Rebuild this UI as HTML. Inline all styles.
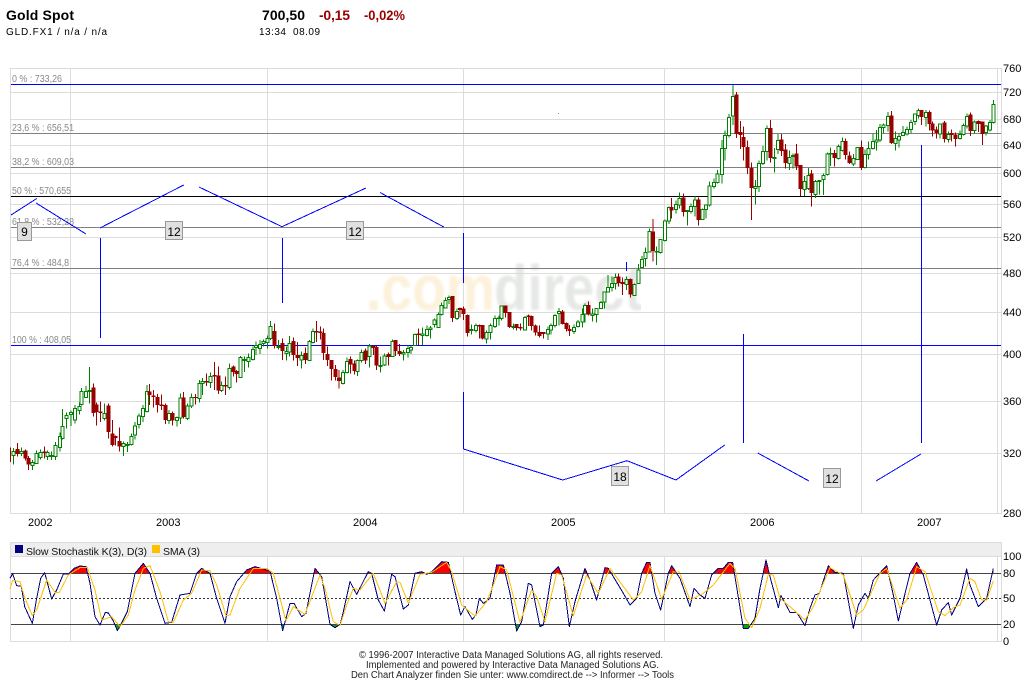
<!DOCTYPE html>
<html lang="de"><head><meta charset="utf-8"><title>Gold Spot</title>
<style>
html,body{margin:0;padding:0;background:#fff;width:1024px;height:680px;overflow:hidden}
svg{display:block}
text{font-family:"Liberation Sans",sans-serif}
.s{shape-rendering:crispEdges}
.g{stroke:#dcdcdc;fill:none;stroke-width:1}
.gw{fill:none;stroke:#008000;stroke-width:3}
.rw{fill:none;stroke:#990000;stroke-width:3}
.gb{fill:#fff;stroke:#008000;stroke-width:3}
.rb{fill:#990000;stroke:#990000;stroke-width:3}
.k{fill:none;stroke:#000080;stroke-width:3;stroke-linejoin:round}
.d{fill:none;stroke:#ffc000;stroke-width:3;stroke-linejoin:round}
.fr{fill:#f00}
.fg{fill:#0a0}
.fib{font-size:10px;fill:#888}
.ax{font-size:11px;fill:#000}
.ft{font-size:10px;fill:#222}
.bl{stroke:#0000ff;stroke-width:1;fill:none}
.box{fill:#e0e0e0;stroke:#999;stroke-width:1}
.bt{font-size:12px;fill:#000;text-anchor:middle}
</style></head><body>
<svg width="1024" height="680" viewBox="0 0 1024 680" xmlns="http://www.w3.org/2000/svg">
<defs>
<filter id="bl" x="-5%" y="-5%" width="110%" height="110%"><feGaussianBlur stdDeviation="1.2"/></filter>
<clipPath id="wm"><rect x="360" y="255" width="281" height="65"/></clipPath>
<clipPath id="cr"><rect x="0" y="540" width="1001" height="33"/></clipPath>
<clipPath id="cg"><rect x="0" y="625" width="1001" height="20"/></clipPath>
</defs>

<!-- header -->
<text x="6" y="20" font-size="14" font-weight="bold" textLength="68">Gold Spot</text>
<text x="262" y="20" font-size="14" font-weight="bold" textLength="43">700,50</text>
<text x="319" y="20" font-size="14" font-weight="bold" fill="#990000" textLength="31">-0,15</text>
<text x="364" y="20" font-size="14" font-weight="bold" fill="#990000" textLength="41" lengthAdjust="spacingAndGlyphs">-0,02%</text>
<text x="6" y="35" font-size="10" textLength="101">GLD.FX1 / n/a / n/a</text>
<text x="259" y="35" font-size="10" textLength="61" xml:space="preserve">13:34  08.09</text>

<!-- watermark -->
<g clip-path="url(#wm)"><g filter="url(#bl)" font-weight="bold" font-size="64">
<text x="366" y="310" fill="#fcf1da" textLength="129" lengthAdjust="spacingAndGlyphs">.com</text>
<text x="494" y="310" fill="#e5e8e5" textLength="149" lengthAdjust="spacingAndGlyphs">direct</text>
</g></g>

<!-- grid -->
<g class="s">
<path class="g" d="M10.5 68.5H1001.5V513.5H10.5ZM11 92.5H1001M11 119.5H1001M11 145.5H1001M11 173.5H1001M11 204.5H1001M11 237.5H1001M11 273.5H1001M11 312.5H1001M11 354.5H1001M11 401.5H1001M11 453.5H1001M70.5 68V513M267.5 68V513M463.5 68V513M664.5 68V513M861.5 68V513M997.5 68V513"/>
<path d="M11 84.5H1001M11 345.5H1001" stroke="#0000ff" fill="none"/>
<path d="M11 133.5H1001M11 167.5H1001M11 227.5H1001M11 268.5H1001" stroke="#808080" fill="none"/>
<path d="M11 196.5H1001" stroke="#000" fill="none"/>
<rect x="558" y="113" width="1" height="1" fill="#888"/>
</g>

<!-- fib labels -->
<text class="fib" x="12" y="82" textLength="50" lengthAdjust="spacingAndGlyphs">0 % : 733,26</text>
<text class="fib" x="12" y="131" textLength="62" lengthAdjust="spacingAndGlyphs">23,6 % : 656,51</text>
<text class="fib" x="12" y="165" textLength="62" lengthAdjust="spacingAndGlyphs">38,2 % : 609,03</text>
<text class="fib" x="12" y="194" textLength="59" lengthAdjust="spacingAndGlyphs">50 % : 570,655</text>
<text class="fib" x="12" y="225" textLength="62" lengthAdjust="spacingAndGlyphs">61,8 % : 532,28</text>
<text class="fib" x="12" y="266" textLength="57" lengthAdjust="spacingAndGlyphs">76,4 % : 484,8</text>
<text class="fib" x="12" y="343" textLength="59" lengthAdjust="spacingAndGlyphs">100 % : 408,05</text>

<!-- candles -->
<g class="s">
<g transform="translate(0 240) scale(.33333)">
<path class="gw" d="M40 624V674M64 622V648M98 660V690M110 632V672M122 628V658M143 632V660M155 634V660M167 606V660M180 578V634M188 507V598M200 518V566M213 512V558M225 495V550M238 488V524M245 444V497M258 438V474M268 381V490M314 490V542M371 605V648M383 606V636M395 580V616M405 546V598M417 520V566M429 495V546M441 435V518M507 510V552M531 530V560M541 460V552M563 490V540M575 460V504M599 420V488M608 414V465M632 398V444M665 425V456M689 370V448M722 348V414M734 350V396M746 340V382M759 320V362M768 304V345M780 300V342M791 298V320M803 286V325M812 243V300M836 300V328M859 320V362M869 288V350M905 335V386M928 300V362M939 266V310"/>
<path class="rw" d="M31 623V666M52 609V650M76 628V662M85 648V690M133 620V656M280 430V530M289 488V557M301 484V546M325 490V596M337 540V620M346 586V616M358 563V635M449 432V495M461 450V502M473 462V518M485 464V510M497 490V552M518 515V556M551 456V536M587 462V494M620 400V438M644 366V450M656 380V462M677 410V465M700 376V410M709 390V428M824 250V326M847 295V360M881 293V362M892 306V378M916 322V372M950 243V306M962 260V298M970 265V360M982 320V378M994 360V422M1006 375V422M1017 390V446"/>
<path class="gb" d="M40 634h4.5V647h-9V634zM64 634h4.5V640h-9V634zM98 667h4.5V677h-9V667zM110 640h4.5V670h-9V640zM122 638h4.5V652h-9V638zM143 637h4.5V650h-9V637zM155 646h4.5V650h-9V646zM167 616h4.5V650h-9V616zM180 590h4.5V622h-9V590zM188 560h4.5V596h-9V560zM200 526h4.5V536h-9V526zM213 518h4.5V524h-9V518zM225 505h4.5V540h-9V505zM238 499h4.5V512h-9V499zM245 454h4.5V494h-9V454zM258 454h4.5V472h-9V454zM268 452h4.5V454h-9V452zM314 520h4.5V536h-9V520zM371 611h4.5V620h-9V611zM383 614h4.5V616h-9V614zM395 589h4.5V613h-9V589zM405 558h4.5V585h-9V558zM417 528h4.5V554h-9V528zM429 505h4.5V529h-9V505zM441 454h4.5V514h-9V454zM507 520h4.5V541h-9V520zM531 533h4.5V541h-9V533zM541 474h4.5V534h-9V474zM563 498h4.5V536h-9V498zM575 472h4.5V498h-9V472zM599 431h4.5V475h-9V431zM608 425h4.5V430h-9V425zM632 409h4.5V428h-9V409zM665 436h4.5V451h-9V436zM689 386h4.5V443h-9V386zM722 352h4.5V412h-9V352zM734 358h4.5V361h-9V358zM746 352h4.5V364h-9V352zM759 328h4.5V358h-9V328zM768 317h4.5V322h-9V317zM780 314h4.5V326h-9V314zM791 305h4.5V311h-9V305zM803 296h4.5V308h-9V296zM812 259h4.5V296h-9V259zM836 319h4.5V322h-9V319zM859 335h4.5V340h-9V335zM869 310h4.5V336h-9V310zM905 346h4.5V360h-9V346zM928 304h4.5V361h-9V304zM939 274h4.5V308h-9V274z"/>
<path class="rb" d="M52 628h4.5V641h-9V628zM76 633h4.5V654h-9V633zM85 655h4.5V672h-9V655zM133 636h4.5V637h-9V636zM280 444h4.5V518h-9V444zM289 495h4.5V515h-9V495zM301 516h4.5V518h-9V516zM325 498h4.5V575h-9V498zM337 582h4.5V614h-9V582zM346 590h4.5V592h-9V590zM358 604h4.5V618h-9V604zM449 456h4.5V464h-9V456zM461 468h4.5V470h-9V468zM473 472h4.5V494h-9V472zM485 495h4.5V497h-9V495zM497 496h4.5V539h-9V496zM518 520h4.5V540h-9V520zM551 474h4.5V530h-9V474zM587 472h4.5V473h-9V472zM620 424h4.5V426h-9V424zM644 406h4.5V408h-9V406zM656 408h4.5V450h-9V408zM677 436h4.5V438h-9V436zM700 381h4.5V394h-9V381zM709 394h4.5V401h-9V394zM824 274h4.5V316h-9V274zM847 310h4.5V332h-9V310zM881 304h4.5V344h-9V304zM892 346h4.5V352h-9V346zM916 340h4.5V358h-9V340zM950 274h4.5V276h-9V274zM962 276h4.5V278h-9V276zM970 280h4.5V338h-9V280zM982 343h4.5V358h-9V343zM994 361h4.5V386h-9V361zM1006 388h4.5V410h-9V388zM1017 414h4.5V422h-9V414z"/>
</g>
<g transform="translate(340 240) scale(.33333)">
<path class="gw" d="M9 390V434M21 352V400M53 358V408M65 328V368M88 312V382M122 350V398M134 340V378M158 298V350M190 330V362M204 316V352M213 318V342M225 280V318M247 262V315M261 256V290M271 258V296M283 236V262M295 218V264M305 188V226M316 172V206M327 166V192M351 206V240M395 254V284M408 250V278M440 272V311M452 250V298M465 226V264M477 226V256M485 196V242M520 250V268M555 228V272M624 260V300M633 250V284M645 222V262M657 204V256M702 254V282M714 240V262M727 206V262M735 190V248M758 205V244M770 204V248M783 183V206M793 155V205M804 105V158M816 110V155M827 100V148M860 110V150M884 130V168M895 72V132"/>
<path class="rw" d="M31 350V400M43 362V404M76 325V372M100 316V345M109 318V390M146 338V376M167 300V348M178 312V348M235 265V316M338 168V246M360 202V232M371 200V240M382 224V290M418 254V296M428 255V298M496 198V232M508 216V264M530 252V272M542 250V272M565 224V258M575 226V272M587 254V286M598 256V292M611 276V295M668 210V254M680 248V274M689 255V288M745 184V226M835 100V140M847 112V165M871 115V172"/>
<path class="gb" d="M9 398h4.5V430h-9V398zM21 365h4.5V397h-9V365zM53 362h4.5V394h-9V362zM65 337h4.5V362h-9V337zM88 318h4.5V350h-9V318zM122 377h4.5V380h-9V377zM134 348h4.5V375h-9V348zM158 305h4.5V349h-9V305zM190 338h4.5V342h-9V338zM204 326h4.5V338h-9V326zM213 322h4.5V330h-9V322zM225 284h4.5V317h-9V284zM247 282h4.5V286h-9V282zM261 268h4.5V287h-9V268zM271 264h4.5V268h-9V264zM283 240h4.5V254h-9V240zM295 224h4.5V262h-9V224zM305 196h4.5V224h-9V196zM316 182h4.5V204h-9V182zM327 172h4.5V178h-9V172zM351 214h4.5V236h-9V214zM395 268h4.5V272h-9V268zM408 256h4.5V272h-9V256zM440 277h4.5V297h-9V277zM452 256h4.5V278h-9V256zM465 236h4.5V260h-9V236zM477 234h4.5V236h-9V234zM485 198h4.5V236h-9V198zM520 259h4.5V262h-9V259zM555 232h4.5V270h-9V232zM624 268h4.5V282h-9V268zM633 256h4.5V270h-9V256zM645 226h4.5V256h-9V226zM657 214h4.5V220h-9V214zM702 262h4.5V274h-9V262zM714 246h4.5V260h-9V246zM727 224h4.5V246h-9V224zM735 196h4.5V222h-9V196zM758 222h4.5V226h-9V222zM770 205h4.5V224h-9V205zM783 187h4.5V205h-9V187zM793 156h4.5V186h-9V156zM804 142h4.5V156h-9V142zM816 131h4.5V143h-9V131zM827 113h4.5V130h-9V113zM860 118h4.5V134h-9V118zM884 133h4.5V166h-9V133zM895 90h4.5V130h-9V90z"/>
<path class="rb" d="M31 358h4.5V372h-9V358zM43 372h4.5V392h-9V372zM76 333h4.5V360h-9V333zM100 320h4.5V322h-9V320zM109 322h4.5V375h-9V322zM146 344h4.5V349h-9V344zM167 302h4.5V332h-9V302zM178 335h4.5V340h-9V335zM235 282h4.5V284h-9V282zM338 170h4.5V232h-9V170zM360 206h4.5V208h-9V206zM371 207h4.5V220h-9V207zM382 226h4.5V278h-9V226zM418 256h4.5V258h-9V256zM428 256h4.5V294h-9V256zM496 198h4.5V218h-9V198zM508 217h4.5V260h-9V217zM530 253h4.5V262h-9V253zM542 262h4.5V264h-9V262zM565 228h4.5V230h-9V228zM575 229h4.5V257h-9V229zM587 258h4.5V276h-9V258zM598 278h4.5V286h-9V278zM611 278h4.5V280h-9V278zM668 216h4.5V250h-9V216zM680 250h4.5V266h-9V250zM689 268h4.5V272h-9V268zM745 196h4.5V222h-9V196zM835 111h4.5V128h-9V111zM847 127h4.5V130h-9V127zM871 118h4.5V162h-9V118z"/>
</g>
<g transform="translate(610 150) scale(.33333)">
<path class="gw" d="M96 318V354M107 293V350M119 235V308M140 290V345M152 268V310M165 208V274M177 170V222M198 152V190M209 127V175M232 180V227M243 160V190M255 138V200M277 175V210M288 165V205M299 95V170M312 85V115M323 60V100"/>
<path class="rw" d="M129 207V335M185 144V205M220 130V200M265 142V227"/>
<path class="gb" d="M96 328h4.5V353h-9V328zM107 308h4.5V326h-9V308zM119 244h4.5V306h-9V244zM140 304h4.5V306h-9V304zM152 268h4.5V308h-9V268zM165 213h4.5V272h-9V213zM177 172h4.5V213h-9V172zM198 163h4.5V178h-9V163zM209 145h4.5V165h-9V145zM232 182h4.5V184h-9V182zM243 170h4.5V184h-9V170zM255 150h4.5V170h-9V150zM277 178h4.5V208h-9V178zM288 165h4.5V178h-9V165zM299 108h4.5V165h-9V108zM312 97h4.5V110h-9V97zM323 72h4.5V97h-9V72z"/>
<path class="rb" d="M129 246h4.5V302h-9V246zM185 172h4.5V180h-9V172zM220 144h4.5V185h-9V144zM265 150h4.5V209h-9V150z"/>
</g>
<g transform="translate(690 70) scale(.33333)">
<path class="gw" d="M96 210V340M105 182V272M117 132V202M129 44V165M197 330V404M207 272V366M219 228V285M231 166V272M254 234V308M264 192V252M299 242V300M309 250V296M344 318V378M355 294V360M377 330V384M389 330V374M401 310V375M413 248V316M421 232V288M446 224V268M458 202V244M491 252V288M503 232V270"/>
<path class="rw" d="M139 66V204M151 153V237M160 170V272M172 212V312M184 278V450M241 150V278M274 192V258M286 222V296M319 222V300M331 285V378M364 300V410M433 240V290M467 206V268M478 244V282"/>
<path class="gb" d="M96 235h4.5V314h-9V235zM105 196h4.5V236h-9V196zM117 142h4.5V196h-9V142zM129 79h4.5V138h-9V79zM197 349h4.5V355h-9V349zM207 280h4.5V350h-9V280zM219 244h4.5V280h-9V244zM231 175h4.5V244h-9V175zM254 263h4.5V265h-9V263zM264 211h4.5V238h-9V211zM299 262h4.5V280h-9V262zM309 256h4.5V260h-9V256zM344 334h4.5V358h-9V334zM355 316h4.5V356h-9V316zM377 334h4.5V374h-9V334zM389 332h4.5V334h-9V332zM401 316h4.5V328h-9V316zM413 252h4.5V314h-9V252zM421 250h4.5V252h-9V250zM446 229h4.5V266h-9V229zM458 214h4.5V242h-9V214zM491 265h4.5V282h-9V265zM503 232h4.5V268h-9V232z"/>
<path class="rb" d="M139 75h4.5V190h-9V75zM151 187h4.5V193h-9V187zM160 202h4.5V230h-9V202zM172 232h4.5V292h-9V232zM184 296h4.5V353h-9V296zM241 175h4.5V263h-9V175zM274 210h4.5V242h-9V210zM286 240h4.5V278h-9V240zM319 252h4.5V288h-9V252zM331 286h4.5V356h-9V286zM364 312h4.5V368h-9V312zM433 250h4.5V262h-9V250zM467 214h4.5V254h-9V214zM478 258h4.5V278h-9V258z"/>
</g>
<g transform="translate(850 90) scale(.33333)">
<path class="gw" d="M45 178V236M56 155V208M69 130V178M80 120V182M90 102V156M101 100V130M114 66V125M137 125V182M147 130V172M159 108V138M171 110V136M183 90V130M195 70V105M205 55V85M228 60V110M270 100V146M296 125V158M330 122V148M340 100V136M351 70V115M374 92V130M408 105V136M420 90V125M431 30V100"/>
<path class="rw" d="M34 152V240M124 63V162M215 60V105M238 62V122M247 95V140M259 110V145M283 93V158M304 118V155M316 128V170M361 68V138M385 92V126M397 95V165"/>
<path class="gb" d="M45 193h4.5V232h-9V193zM56 175h4.5V193h-9V175zM69 155h4.5V176h-9V155zM80 150h4.5V156h-9V150zM90 112h4.5V150h-9V112zM101 105h4.5V112h-9V105zM114 80h4.5V106h-9V80zM137 146h4.5V160h-9V146zM147 140h4.5V150h-9V140zM159 128h4.5V136h-9V128zM171 118h4.5V132h-9V118zM183 98h4.5V118h-9V98zM195 72h4.5V94h-9V72zM205 62h4.5V76h-9V62zM228 67h4.5V82h-9V67zM270 102h4.5V132h-9V102zM296 133h4.5V148h-9V133zM330 133h4.5V146h-9V133zM340 107h4.5V133h-9V107zM351 80h4.5V108h-9V80zM374 96h4.5V122h-9V96zM408 108h4.5V128h-9V108zM420 98h4.5V120h-9V98zM431 43h4.5V97h-9V43z"/>
<path class="rb" d="M34 172h4.5V232h-9V172zM124 78h4.5V158h-9V78zM215 62h4.5V80h-9V62zM238 68h4.5V100h-9V68zM247 102h4.5V120h-9V102zM259 120h4.5V128h-9V120zM283 99h4.5V146h-9V99zM304 131h4.5V133h-9V131zM316 135h4.5V146h-9V135zM361 75h4.5V122h-9V75zM385 95h4.5V100h-9V95zM397 96h4.5V130h-9V96z"/>
</g>
</g>

<!-- blue analysis lines -->
<g class="s">
<path class="bl" d="M100.5 238V338M282.5 238V303M463.5 233V283M463.5 392V449M626.5 262V271M743.5 334V443M921.5 145V443"/>
</g>
<path class="bl s" d="M11 215L36.7 198.5M36 203L86 234M100 228L183.7 185M199 187L282 226.7L366 188M380 192.5L443.7 227M463.5 449L562.7 480L627 460.7L676 480L724.7 445M757.7 453L809 481M876 481L921 454"/>

<!-- boxes -->
<g class="s">
<rect class="box" x="17.5" y="222.5" width="14" height="18"/>
<rect class="box" x="165.5" y="221.5" width="17" height="18"/>
<rect class="box" x="346.5" y="221.5" width="17" height="18"/>
<rect class="box" x="611.5" y="466.5" width="17" height="19"/>
<rect class="box" x="823.5" y="468.5" width="17" height="19"/>
</g>
<text class="bt" x="24.5" y="236">9</text>
<text class="bt" x="174" y="236">12</text>
<text class="bt" x="355" y="236">12</text>
<text class="bt" x="620" y="481">18</text>
<text class="bt" x="832" y="483">12</text>

<!-- axis labels -->
<g class="ax">
<text x="1003" y="72">760</text><text x="1003" y="96">720</text><text x="1003" y="123">680</text><text x="1003" y="149">640</text><text x="1003" y="177">600</text><text x="1003" y="208">560</text><text x="1003" y="241">520</text><text x="1003" y="277">480</text><text x="1003" y="316">440</text><text x="1003" y="358">400</text><text x="1003" y="405">360</text><text x="1003" y="457">320</text><text x="1003" y="517">280</text>
<text x="1003" y="560">100</text><text x="1003" y="577">80</text><text x="1003" y="602">50</text><text x="1003" y="628">20</text><text x="1003" y="645">0</text>
<text x="28" y="526">2002</text><text x="156" y="526">2003</text><text x="353" y="526">2004</text><text x="551" y="526">2005</text><text x="750" y="526">2006</text><text x="917" y="526">2007</text>
</g>

<!-- stochastic panel -->
<g class="s">
<rect x="11" y="543" width="990" height="14" fill="#eeeeee"/>
<path class="g" d="M10.5 542.5H1001.5V641.5H10.5ZM11 556.5H1001M70.5 557V641M267.5 557V641M463.5 557V641M664.5 557V641M861.5 557V641M997.5 557V641"/>
<rect x="15" y="545" width="8" height="8" fill="#000080"/>
<rect x="152" y="545" width="8" height="8" fill="#ffc000"/>
<path d="M11 573.5H1001M11 624.5H1001" stroke="#444" fill="none"/>
<path d="M11 598.5H1001" stroke="#333" stroke-dasharray="2 2" fill="none"/>
</g>
<text x="26" y="555" font-size="10.5" fill="#111" textLength="121">Slow Stochastik K(3), D(3)</text>
<text x="163" y="555" font-size="10.5" fill="#111" textLength="37">SMA (3)</text>

<g class="s">
<g clip-path="url(#cr)">
<path class="fr" transform="translate(0 535) scale(.33333)" d="M30 130 38 116 50 152 64 154 74 215 97 265 110 190 122 130 134 113 155 192 170 165 190 117 205 117 222 100 240 93 258 95 270 145 285 245 300 270 316 232 325 234 340 258 352 287 362 270 382 230 405 115 430 85 450 115 470 190 495 265 515 262 540 180 570 175 590 115 605 100 630 115 650 190 675 265 690 185 710 140 740 105 765 95 810 108 830 190 848 287 870 205 882 205 905 245 918 235 945 100 965 125 990 268 1005 278 1020 268V115H30z"/>
<path class="fr" transform="translate(340 535) scale(.33333)" d="M0 270 10 230 30 140 50 178 85 110 95 115 115 195 133 228 155 118 165 125 190 222 205 210 225 115 245 110 260 118 275 110 305 80 325 82 345 170 362 240 375 215 397 253 408 240 418 190 430 205 450 190 470 90 490 90 510 175 530 288 545 260 565 145 575 150 600 275 610 270 635 115 655 95 670 130 688 275 705 200 735 100 750 135 770 195 795 98 805 100 850 175 870 210 890 190 905 115 920 82 930 82 945 175 962 225 985 115 995 92 1020 130V115H0z"/>
<path class="fr" transform="translate(680 535) scale(.33333)" d="M0 130 30 215 42 160 60 180 75 190 95 120 115 100 130 100 145 82 158 82 190 280 205 280 225 250 240 160 258 75 270 125 295 218 303 182 330 232 350 232 375 272 390 220 405 180 418 175 445 92 465 112 490 115 520 280 535 210 555 175 565 190 580 135 620 92 640 180 655 258 690 115 710 82 730 120 770 270 785 225 805 203 815 240 840 190 860 102 870 150 895 215 920 190 940 100V115H0z"/>
</g>
<g clip-path="url(#cg)">
<path class="fg" transform="translate(0 535) scale(.33333)" d="M30 130 38 116 50 152 64 154 74 215 97 265 110 190 122 130 134 113 155 192 170 165 190 117 205 117 222 100 240 93 258 95 270 145 285 245 300 270 316 232 325 234 340 258 352 287 362 270 382 230 405 115 430 85 450 115 470 190 495 265 515 262 540 180 570 175 590 115 605 100 630 115 650 190 675 265 690 185 710 140 740 105 765 95 810 108 830 190 848 287 870 205 882 205 905 245 918 235 945 100 965 125 990 268 1005 278 1020 268V268H30z"/>
<path class="fg" transform="translate(340 535) scale(.33333)" d="M0 270 10 230 30 140 50 178 85 110 95 115 115 195 133 228 155 118 165 125 190 222 205 210 225 115 245 110 260 118 275 110 305 80 325 82 345 170 362 240 375 215 397 253 408 240 418 190 430 205 450 190 470 90 490 90 510 175 530 288 545 260 565 145 575 150 600 275 610 270 635 115 655 95 670 130 688 275 705 200 735 100 750 135 770 195 795 98 805 100 850 175 870 210 890 190 905 115 920 82 930 82 945 175 962 225 985 115 995 92 1020 130V268H0z"/>
<path class="fg" transform="translate(680 535) scale(.33333)" d="M0 130 30 215 42 160 60 180 75 190 95 120 115 100 130 100 145 82 158 82 190 280 205 280 225 250 240 160 258 75 270 125 295 218 303 182 330 232 350 232 375 272 390 220 405 180 418 175 445 92 465 112 490 115 520 280 535 210 555 175 565 190 580 135 620 92 640 180 655 258 690 115 710 82 730 120 770 270 785 225 805 203 815 240 840 190 860 102 870 150 895 215 920 190 940 100V268H0z"/>
</g>
<path class="k" transform="translate(0 535) scale(.33333)" d="M30 130 38 116 50 152 64 154 74 215 97 265 110 190 122 130 134 113 155 192 170 165 190 117 205 117 222 100 240 93 258 95 270 145 285 245 300 270 316 232 325 234 340 258 352 287 362 270 382 230 405 115 430 85 450 115 470 190 495 265 515 262 540 180 570 175 590 115 605 100 630 115 650 190 675 265 690 185 710 140 740 105 765 95 810 108 830 190 848 287 870 205 882 205 905 245 918 235 945 100 965 125 990 268 1005 278 1020 268"/>
<path class="k" transform="translate(340 535) scale(.33333)" d="M0 270 10 230 30 140 50 178 85 110 95 115 115 195 133 228 155 118 165 125 190 222 205 210 225 115 245 110 260 118 275 110 305 80 325 82 345 170 362 240 375 215 397 253 408 240 418 190 430 205 450 190 470 90 490 90 510 175 530 288 545 260 565 145 575 150 600 275 610 270 635 115 655 95 670 130 688 275 705 200 735 100 750 135 770 195 795 98 805 100 850 175 870 210 890 190 905 115 920 82 930 82 945 175 962 225 985 115 995 92 1020 130"/>
<path class="k" transform="translate(680 535) scale(.33333)" d="M0 130 30 215 42 160 60 180 75 190 95 120 115 100 130 100 145 82 158 82 190 280 205 280 225 250 240 160 258 75 270 125 295 218 303 182 330 232 350 232 375 272 390 220 405 180 418 175 445 92 465 112 490 115 520 280 535 210 555 175 565 190 580 135 620 92 640 180 655 258 690 115 710 82 730 120 770 270 785 225 805 203 815 240 840 190 860 102 870 150 895 215 920 190 940 100"/>
<path class="d" transform="translate(0 535) scale(.33333)" d="M30 162 38 136 60 140 75 190 97 242 110 225 140 135 165 172 178 172 205 120 240 98 262 97 285 165 305 255 335 245 360 275 385 240 405 165 430 100 450 92 480 170 505 260 520 262 550 195 575 175 605 105 630 107 650 150 678 242 690 240 720 160 760 100 800 100 820 115 858 258 880 215 915 238 960 120 975 160 1000 260 1020 272"/>
<path class="d" transform="translate(340 535) scale(.33333)" d="M0 272 20 210 40 160 60 165 100 115 135 205 170 140 180 142 205 205 240 118 275 112 320 82 335 110 365 210 405 243 440 200 460 150 480 95 500 105 540 262 575 165 590 185 615 260 650 115 665 120 700 243 740 120 775 175 810 100 880 195 905 170 930 92 965 192 1000 110 1020 112"/>
<path class="d" transform="translate(680 535) scale(.33333)" d="M0 118 30 195 70 175 100 150 150 85 165 100 195 250 215 278 240 220 265 118 280 120 300 190 330 215 375 255 400 215 450 98 490 120 530 240 550 225 600 115 620 100 660 220 680 195 710 95 735 110 775 230 795 242 820 218 840 210 870 130 885 140 905 195 920 195 940 138"/>
</g>

<!-- footer -->
<text class="ft" x="359" y="658" textLength="304" lengthAdjust="spacingAndGlyphs">© 1996-2007 Interactive Data Managed Solutions AG, all rights reserved.</text>
<text class="ft" x="366" y="668" textLength="293" lengthAdjust="spacingAndGlyphs">Implemented and powered by Interactive Data Managed Solutions AG.</text>
<text class="ft" x="351" y="678" textLength="323" lengthAdjust="spacingAndGlyphs">Den Chart Analyzer finden Sie unter: www.comdirect.de --&gt; Informer --&gt; Tools</text>
</svg>
</body></html>
